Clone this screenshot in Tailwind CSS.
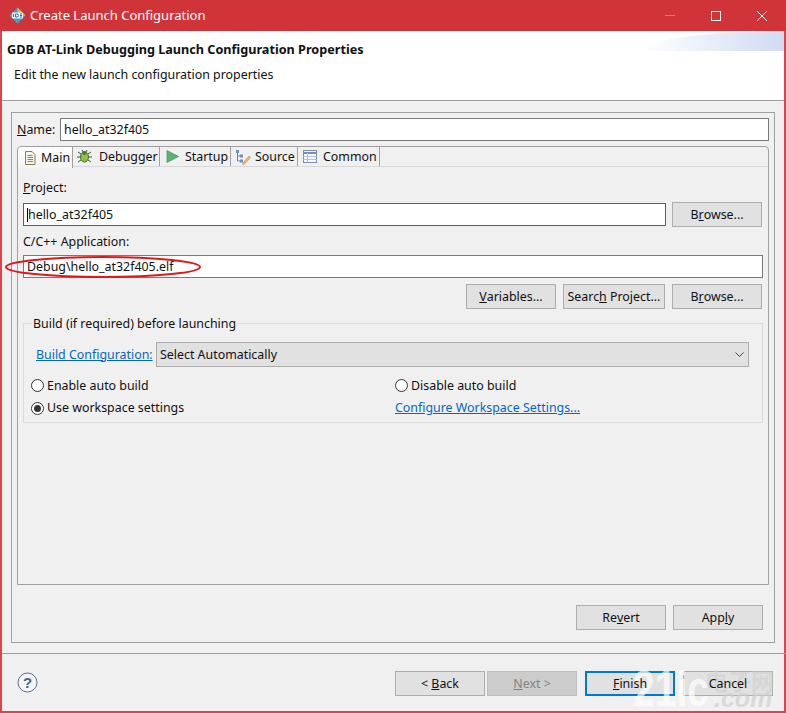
<!DOCTYPE html>
<html lang="en">
<head>
    <meta charset="UTF-8">
    <title>Create Launch Configuration</title>
    <script src="https://cdn.jsdelivr.net/npm/@tailwindcss/browser@4"></script>
</head>
<body class="m-0 overflow-hidden">
<div class="relative w-[786px] h-[713px] flex flex-col bg-[#f0f0f0] border-x-2 border-b-2 border-[#d9454c] font-['Noto_Sans','Open_Sans',sans-serif] text-[12.4px] leading-[14px] text-[#111]">

    <!-- Title bar -->
    <div class="h-[31px] -mx-[2px] shrink-0 bg-[#d13438] flex items-center text-white leading-none">
        <svg class="ml-[9px] w-[17px] h-[17px]" viewBox="0 0 17 17">
            <path d="M8.5 0.5 L16.5 8.5 L8.5 16.5 L0.5 8.5 Z" fill="#35a7c9"/>
            <path d="M8.5 0.5 L16.5 8.5 L8.5 9 Z" fill="#e9b44c"/>
            <rect x="3" y="5.5" width="11" height="6" rx="1" fill="#f4f4f4"/>
            <path d="M4.5 7v3M6.5 7v3h1.5a1.5 1.5 0 0 0 0-3zM11 7h2M11 8.5h2M11 10h2" stroke="#2a6fb0" stroke-width="1" fill="none"/>
        </svg>
        <span class="ml-[4px] text-[13px]">Create Launch Configuration</span>
        <div class="ml-auto flex items-center mr-[1px]">
            <div class="w-[46px] flex justify-center"><div class="w-[10px] h-px bg-[#e8777b]"></div></div>
            <div class="w-[46px] flex justify-center"><div class="w-[10px] h-[10px] border border-white"></div></div>
            <div class="w-[46px] flex justify-center">
                <svg class="w-[10px] h-[10px]" viewBox="0 0 10 10"><path d="M0 0L10 10M10 0L0 10" stroke="#fff" stroke-width="1" fill="none"/></svg>
            </div>
        </div>
    </div>

    <!-- Wizard header -->
    <div class="relative h-[70px] shrink-0 bg-white border-b border-[#a0a0a0]">
        <div class="absolute right-0 top-0 w-[142px] h-[20px] bg-gradient-to-r from-white to-[#d0dcf2] rounded-tl-[100%_100%]"></div>
        <div class="pl-[5px] pt-[12px] font-bold text-[12.65px] leading-none">GDB AT-Link Debugging Launch Configuration Properties</div>
        <div class="pl-[12px] pt-[12px]">Edit the new launch configuration properties</div>
    </div>

    <!-- Launch configuration panel -->
    <div class="ml-[9px] mt-[11px] w-[764px] h-[531px] shrink-0 border border-[#a0a0a0] px-[5px] pt-[5px]">
        <div class="flex items-center h-[23px] w-[752px]">
            <span class="w-[43px]"><span class="underline">N</span>ame:</span>
            <div class="flex-1 h-[23px] bg-white border border-[#7a7a7a] flex items-center pl-[3px]">hello_at32f405</div>
        </div>

        <!-- Tab folder -->
        <div class="mt-[5px] w-[752px] h-[439px] border border-[#a0a0a0] rounded-t-[4px]">
            <div class="flex h-[20px] border-b border-[#d8d8d8]">
                <div class="w-[55px] h-[21px] bg-gradient-to-b from-white to-[#f4f4f4] border-r border-[#a0a0a0] rounded-tl-[4px] flex items-center pl-[6px] gap-[5px]">
                    <svg class="w-[12px] h-[14px]" viewBox="0 0 12 14"><path d="M1.5 .5H8L11 3.5V13.5H1.5Z" fill="#f6f4e8" stroke="#8c7a50"/><path d="M3.5 4.5H8.5M3.5 6.5H9M3.5 8.5H9M3.5 10.5H9" stroke="#6f87b8"/></svg>
                    <span class="pt-[1px]">Main</span>
                </div>
                <div class="w-[87px] border-r border-[#a0a0a0] flex items-center pl-[4px] gap-[7px]">
                    <svg class="w-[15px] h-[15px]" viewBox="0 0 15 15"><path d="M1 3L4 5M14 3L11 5M0 8H3M15 8H12M1 13L4 11M14 13L11 11M5 1L6 3M10 1L9 3" stroke="#3a5a3a"/><ellipse cx="7.5" cy="8" rx="4" ry="5" fill="#8fc23e" stroke="#3f6a2a"/><circle cx="7.5" cy="4" r="2" fill="#4a7a3a"/></svg>
                    <span class="pt-[1px]">Debugger</span>
                </div>
                <div class="w-[71px] border-r border-[#a0a0a0] flex items-center pl-[6px] gap-[6px]">
                    <svg class="w-[13px] h-[13px]" viewBox="0 0 13 13"><path d="M1 .5L12.5 6.5L1 12.5Z" fill="#5cb270" stroke="#4a9a5e" stroke-width=".8"/></svg>
                    <span class="pt-[1px]">Startup</span>
                </div>
                <div class="w-[67px] border-r border-[#a0a0a0] flex items-center pl-[4px] gap-[4px]">
                    <svg class="w-[16px] h-[16px]" viewBox="0 0 16 16"><path d="M2.5 3V12H5M2.5 7H5" stroke="#6a7fa8" fill="none"/><rect x="1" y="1" width="3" height="3" fill="#6f8fc0"/><rect x="5" y="5.500" width="3" height="3" fill="#6f8fc0"/><rect x="5" y="10.500" width="3" height="3" fill="#6f8fc0"/><path d="M8 14L14 7L15.500 8.500L9.500 15L7.500 15.500Z" fill="#e8b96a" stroke="#b98b45" stroke-width=".6"/></svg>
                    <span class="pt-[1px]">Source</span>
                </div>
                <div class="w-[82px] border-r border-[#a0a0a0] flex items-center pl-[5px] gap-[6px]">
                    <svg class="w-[14px] h-[13px]" viewBox="0 0 14 13"><rect x=".5" y=".5" width="13" height="12" fill="#f4f6fa" stroke="#7b8db0"/><path d="M.5 3H13.500" stroke="#7b8db0" stroke-width="2"/><path d="M4.500 3V12.500M.5 6.500H13.500M.5 9.500H13.500" stroke="#b9c4d8"/></svg>
                    <span class="pt-[1px]">Common</span>
                </div>
            </div>

            <div class="px-[5px]">
                <div class="mt-[15px] h-[12px] leading-none"><span class="underline">P</span>roject:</div>
                <div class="mt-[8px] flex items-center h-[25px]">
                    <div class="w-[643px] h-[23px] bg-white border border-[#0078d7] flex items-center pl-[3px]"><span class="border-l border-black">hello_at32f405</span></div>
                    <div class="ml-[6px] w-[90px] h-[25px] bg-[#e1e1e1] border border-[#adadad] flex items-center justify-center">B<span class="underline">r</span>owse...</div>
                </div>
                <div class="mt-[9px] h-[12px] leading-none">C/C++ Application:</div>
                <div class="mt-[7px] w-[740px] h-[23px] bg-white border border-[#7a7a7a] flex items-center pl-[3px]">Debug\hello_at32f405.elf</div>
                <div class="mt-[6px] flex justify-end gap-[7px] pr-[1px]">
                    <div class="w-[90px] h-[25px] bg-[#e1e1e1] border border-[#adadad] flex items-center justify-center"><span class="underline">V</span>ariables...</div>
                    <div class="w-[102px] h-[25px] bg-[#e1e1e1] border border-[#adadad] flex items-center justify-center">Searc<span class="underline">h</span>&nbsp;Project...</div>
                    <div class="w-[90px] h-[25px] bg-[#e1e1e1] border border-[#adadad] flex items-center justify-center">B<span class="underline">r</span>owse...</div>
                </div>

                <!-- Build group -->
                <div class="relative mt-[14px] w-[740px] h-[100px] border border-[#dcdcdc]">
                    <span class="absolute left-[8px] -top-[6px] bg-[#f0f0f0] px-px leading-none">Build (if required) before launching</span>
                    <div class="ml-[12px] mt-[18px] flex items-center h-[25px]">
                        <span class="w-[120px] text-[#0066cc] underline">Build Configuration:</span>
                        <div class="w-[593px] h-[25px] bg-[#e1e1e1] border border-[#adadad] flex items-center pl-[3px]">
                            Select Automatically
                            <svg class="ml-auto mr-[4px] w-[9px] h-[6px]" viewBox="0 0 9 6"><path d="M.5 .5L4.500 4.500L8.500 .5" stroke="#444" fill="none"/></svg>
                        </div>
                    </div>
                    <div class="ml-[7px] mt-[12px] grid grid-cols-[364px_1fr] gap-y-[9px] items-center">
                        <div class="flex items-center gap-[3px] h-[13px]">
                            <span class="w-[13px] h-[13px] rounded-full bg-white border border-[#333]"></span>Enable auto build
                        </div>
                        <div class="flex items-center gap-[3px] h-[13px]">
                            <span class="w-[13px] h-[13px] rounded-full bg-white border border-[#333]"></span>Disable auto build
                        </div>
                        <div class="flex items-center gap-[3px] h-[13px]">
                            <span class="w-[13px] h-[13px] rounded-full bg-white border border-[#333] flex items-center justify-center"><span class="w-[7px] h-[7px] rounded-full bg-[#333]"></span></span>Use workspace settings
                        </div>
                        <span class="text-[#0066cc] underline">Configure Workspace Settings...</span>
                    </div>
                </div>
            </div>
        </div>

        <div class="mt-[20px] flex justify-end gap-[7px] w-[752px] pr-[6px]">
            <div class="w-[90px] h-[25px] bg-[#e1e1e1] border border-[#adadad] flex items-center justify-center">Re<span class="underline">v</span>ert</div>
            <div class="w-[90px] h-[25px] bg-[#e1e1e1] border border-[#adadad] flex items-center justify-center">App<span class="underline">l</span>y</div>
        </div>
    </div>

    <!-- Wizard buttons -->
    <div class="mt-[10px] -mr-[2px] border-t border-[#a0a0a0] flex-1 flex items-start">
        <svg class="ml-[15px] mt-[18px] w-[21px] h-[21px]" viewBox="0 0 21 21">
            <circle cx="10.500" cy="10.500" r="9.500" fill="#f4f5f8" stroke="#5a6d94"/>
            <text x="10.500" y="16" text-anchor="middle" font-family="Liberation Sans" font-weight="700" font-size="15" fill="#4a5f8a">?</text>
        </svg>
        <div class="ml-auto mr-[13px] mt-[17px] flex">
            <div class="w-[90px] h-[25px] bg-[#e1e1e1] border border-[#adadad] flex items-center justify-center">&lt;&nbsp;<span class="underline">B</span>ack</div>
            <div class="ml-[2px] w-[90px] h-[25px] bg-[#cccccc] border border-[#bfbfbf] text-[#838383] flex items-center justify-center"><span class="underline">N</span>ext &gt;</div>
            <div class="ml-[8px] w-[90px] h-[25px] bg-[#e1e1e1] border-2 border-[#0078d7] flex items-center justify-center"><span class="relative z-10"><span class="underline">F</span>inish</span></div>
            <div class="ml-[8px] w-[90px] h-[25px] bg-[#e1e1e1] border border-[#adadad] flex items-center justify-center"><span class="relative z-10">Cancel</span></div>
        </div>
    </div>

    <!-- Red annotation over the application field -->
    <svg class="absolute left-[1px] top-[254px] w-[202px] h-[26px]" viewBox="0 0 202 26"><ellipse cx="100" cy="13" rx="97" ry="10" fill="none" stroke="#e0161c" stroke-width="2"/></svg>

    <!-- Site watermark -->
    <div class="absolute left-[631px] top-[664px] origin-left scale-x-[.78] text-white/70 font-['Liberation_Sans',sans-serif] font-bold text-[50px] leading-[50px]">21ic</div>
    <div class="absolute left-[703px] top-[668px] text-[#cfcfcf]/60 font-['Noto_Sans_CJK_SC',sans-serif] text-[23px] leading-[24px] font-bold">电子网</div>
    <div class="absolute left-[712px] top-[688px] text-[#cfcfcf]/70 font-['Liberation_Sans',sans-serif] font-bold italic text-[25px] leading-[20px]">.com</div>
</div>
</body>
</html>
